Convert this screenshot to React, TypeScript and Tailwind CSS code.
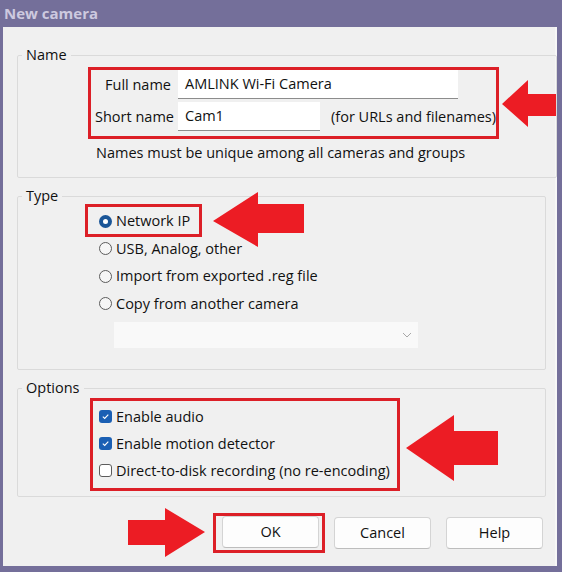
import React from "react";

function ArrowLeft({ w, h, tip, base, sTop, sBot, className }: { w: number; h: number; tip: number; base: number; sTop: number; sBot: number; className?: string }) {
  const pts = `0,${tip} ${base},0 ${base},${sTop} ${w},${sTop} ${w},${sBot} ${base},${sBot} ${base},${h}`;
  return (
    <svg width={w} height={h} viewBox={`0 0 ${w} ${h}`} className={className}>
      <polygon points={pts} fill="#ec1c24" />
    </svg>
  );
}

function ArrowRight({ className }: { className?: string }) {
  return (
    <svg width={77} height={49} viewBox="0 0 77 49" className={className}>
      <polygon points="0,12 37,12 37,0 77,24 37,49 37,37 0,37" fill="#ec1c24" />
    </svg>
  );
}

function Radio({ checked, label }: { checked?: boolean; label: string }) {
  return (
    <div className="flex items-center h-[26px]">
      {checked ? (
        <span className="w-[13px] h-[13px] rounded-full bg-[#1a5597] flex items-center justify-center shrink-0">
          <span className="w-[5px] h-[5px] rounded-full bg-white" />
        </span>
      ) : (
        <span className="w-[13px] h-[13px] rounded-full border border-[#5c5c5c] bg-[#f6f6f6] shrink-0" />
      )}
      <span className="ml-[4px] whitespace-nowrap">{label}</span>
    </div>
  );
}

function Check({ checked, label }: { checked?: boolean; label: string }) {
  return (
    <div className="flex items-center h-[27px]">
      {checked ? (
        <span className="w-[13px] h-[13px] rounded-[3px] bg-[#1a5fb4] flex items-center justify-center shrink-0">
          <svg width="9" height="9" viewBox="0 0 9 9">
            <path d="M1.8 4.6 L3.7 6.4 L7.3 2.6" fill="none" stroke="white" strokeWidth="1.1" />
          </svg>
        </span>
      ) : (
        <span className="w-[13px] h-[13px] rounded-[3px] border border-[#5c5c5c] bg-white shrink-0" />
      )}
      <span className="ml-[4px] whitespace-nowrap">{label}</span>
    </div>
  );
}

function Button({ label }: { label: string }) {
  return (
    <button className="w-[97px] h-[32px] bg-[#fdfdfd] border border-[#d4d4d4] border-b-[#bdbdbd] rounded-[4px] flex items-center justify-center shrink-0">
      {label}
    </button>
  );
}

export default function App() {
  return (
    <div className="w-[562px] h-[572px] bg-[#746f9a] flex flex-col font-['Open_Sans',sans-serif] text-[14.5px] text-[#111]">
      <div className="h-[27px] shrink-0 pl-[4px] flex items-center font-bold text-[15px] text-[#cdc9df]">New camera</div>
      <div className="ml-[3px] mr-[5px] h-[539px] bg-[#f0f0f0] border-r-2 border-[#f7f7f7] flex flex-col pt-[18px] pl-[14px]">
        {/* Name */}
        <fieldset className="w-[529px] border border-[#dadada] rounded-[2px] pb-[14px]">
          <legend className="ml-[4px] px-[4px] leading-[20px]">Name</legend>
          <div className="flex items-center mt-[2px]">
            <div className="ml-[70px] w-[411px] shrink-0 border-[3px] border-[#dc1f27] pl-[4px] pb-[5px] grid grid-cols-[76px_1fr] gap-x-[7px] gap-y-[3px] items-center">
              <span className="text-right whitespace-nowrap">Full name</span>
              <div className="w-[280px] h-[29px] bg-white border-b border-[#8c8c8c] pl-[7px] flex items-center">AMLINK Wi-Fi Camera</div>
              <span className="text-right whitespace-nowrap">Short name</span>
              <div className="flex items-center">
                <div className="w-[142px] h-[29px] bg-white border-b border-[#8c8c8c] pl-[7px] flex items-center">Cam1</div>
                <span className="ml-[11px] whitespace-nowrap">(for URLs and filenames)</span>
              </div>
            </div>
            <ArrowLeft w={54} h={47} tip={24} base={26} sTop={14} sBot={36} className="ml-[3px] shrink-0" />
          </div>
          <div className="ml-[78px] mt-[4px] leading-[20px]">Names must be unique among all cameras and groups</div>
        </fieldset>

        {/* Type */}
        <fieldset className="w-[529px] mt-[8px] border border-[#dadada] rounded-[2px] pb-[21px]">
          <legend className="ml-[4px] px-[4px] leading-[20px]">Type</legend>
          <div className="flex items-center -mt-[2px]">
            <div className="ml-[67px] w-[117px] shrink-0 border-[3px] border-[#dc1f27] pl-[11px] pt-[1px] -mb-[2px]">
              <Radio checked label="Network IP" />
            </div>
            <ArrowLeft w={91} h={55} tip={29} base={45} sTop={12} sBot={41} className="ml-[11px] -my-[12px] shrink-0" />
          </div>
          <div className="ml-[81px] flex flex-col">
            <div className="h-[27px] flex items-center"><Radio label="USB, Analog, other" /></div>
            <div className="h-[28px] flex items-center"><Radio label="Import from exported .reg file" /></div>
            <div className="h-[27px] flex items-center"><Radio label="Copy from another camera" /></div>
          </div>
          <div className="ml-[96px] mt-[5px] w-[304px] h-[26px] bg-[#f9f9f9] flex items-center justify-end pr-[6px]">
            <svg width="10" height="6" viewBox="0 0 10 6">
              <path d="M1 1 L5 5 L9 1" fill="none" stroke="#a8a8a8" strokeWidth="1" />
            </svg>
          </div>
        </fieldset>

        {/* Options */}
        <fieldset className="w-[529px] mt-[8px] border border-[#dadada] rounded-[2px] pb-[5px]">
          <legend className="ml-[4px] px-[4px] leading-[20px]">Options</legend>
          <div className="flex items-start">
            <div className="ml-[72px] w-[310px] shrink-0 border-[3px] border-[#dc1f27] pl-[6px] pt-[2px] pb-[4px] flex flex-col">
              <Check checked label="Enable audio" />
              <Check checked label="Enable motion detector" />
              <Check label="Direct-to-disk recording (no re-encoding)" />
            </div>
            <ArrowLeft w={92} h={66} tip={33} base={48} sTop={16} sBot={50} className="ml-[6px] mt-[17px] shrink-0" />
          </div>
        </fieldset>

        {/* Buttons */}
        <div className="w-[529px] mt-[11px] flex items-center justify-end pr-[3px]">
          <ArrowRight className="shrink-0" />
          <div className="ml-[8px] border-[3px] border-[#dc1f27] pl-[6px] pr-[3px] pb-[2px] shrink-0">
            <Button label="OK" />
          </div>
          <div className="ml-[9px]"><Button label="Cancel" /></div>
          <div className="ml-[15px]"><Button label="Help" /></div>
        </div>
      </div>
    </div>
  );
}
